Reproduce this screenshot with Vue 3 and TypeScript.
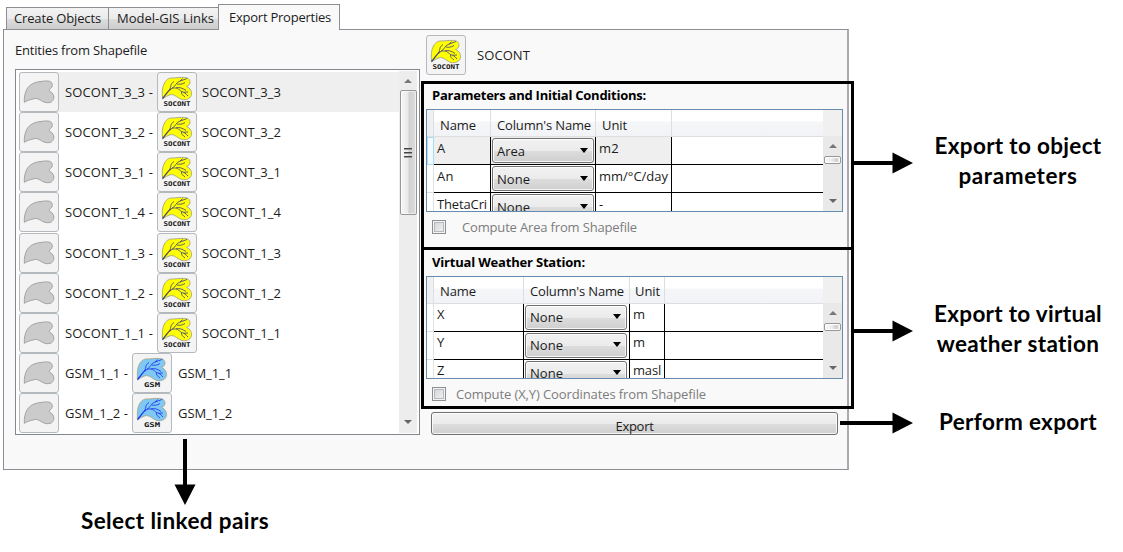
<script setup lang="ts">
import type { Directive } from 'vue'

interface Pair { name: string; kind: 'SOCONT' | 'GSM' }
interface GridRow { name: string; column: string; unit: string; unitWidth: number; nameWidth: number; selected?: boolean }
interface Grid {
  id: string
  title: string
  titleWidth: number
  rows: GridRow[]
  check: string
  checkWidth: number
}

/* Spreads the letters of a label so that it takes the given width. */
const vFit: Directive<HTMLElement, number> = {
  mounted(el, binding) {
    const count = (el.textContent ?? '').trim().length
    const natural = el.getBoundingClientRect().width
    if (count > 0) el.style.letterSpacing = `${(binding.value - natural) / count}px`
  },
}

const pairs: Pair[] = [
  { name: 'SOCONT_3_3', kind: 'SOCONT' },
  { name: 'SOCONT_3_2', kind: 'SOCONT' },
  { name: 'SOCONT_3_1', kind: 'SOCONT' },
  { name: 'SOCONT_1_4', kind: 'SOCONT' },
  { name: 'SOCONT_1_3', kind: 'SOCONT' },
  { name: 'SOCONT_1_2', kind: 'SOCONT' },
  { name: 'SOCONT_1_1', kind: 'SOCONT' },
  { name: 'GSM_1_1', kind: 'GSM' },
  { name: 'GSM_1_2', kind: 'GSM' },
]

const grids: Grid[] = [
  {
    id: 'params',
    title: 'Parameters and Initial Conditions:',
    titleWidth: 214,
    rows: [
      { name: 'A', nameWidth: 9, column: 'Area', unit: 'm2', unitWidth: 20, selected: true },
      { name: 'An', nameWidth: 17, column: 'None', unit: 'mm/°C/day', unitWidth: 69 },
      { name: 'ThetaCri', nameWidth: 50, column: 'None', unit: '-', unitWidth: 6 },
    ],
    check: 'Compute Area from Shapefile',
    checkWidth: 175,
  },
  {
    id: 'station',
    title: 'Virtual Weather Station:',
    titleWidth: 153,
    rows: [
      { name: 'X', nameWidth: 9, column: 'None', unit: 'm', unitWidth: 12 },
      { name: 'Y', nameWidth: 8, column: 'None', unit: 'm', unitWidth: 12 },
      { name: 'Z', nameWidth: 8, column: 'None', unit: 'masl', unitWidth: 28 },
    ],
    check: 'Compute (X,Y) Coordinates from Shapefile',
    checkWidth: 250,
  },
]
</script>

<template>
  <div class="page">
    <svg class="defs" width="0" height="0" aria-hidden="true">
      <defs>
        <symbol id="shape" viewBox="0 0 40 40">
          <path d="M5.3 30.3C5 25 6.200 20 8 17C11 12 16 10 22 9.500C27 8.500 31 8.700 32.500 10.500C34 13 33.500 15.500 30.600 17.300C29.800 19 31.500 20 33.200 21C36 24 35 28.500 31.800 30.300C28 31.500 24 30 21.500 28.200C18.500 26.300 16.500 26 14 27C11 27.600 8.500 28.400 5.300 30.300Z" fill="#cbcbcb" stroke="#a3a3a3" stroke-width="1" />
        </symbol>
        <symbol id="leaf" viewBox="0 0 40 40">
          <path d="M5.500 27C5.200 21 5 15 7.500 11C9.500 7 12.500 5.500 17 6C22 5.500 27 4.800 31 6.200C34.500 9 33 13.500 29.500 14.500C33.500 16 35.300 20 34.200 23.500C33 27 29 28.300 25 27.500C21 26.500 18.500 22.500 14.500 22.500C11 23 8.500 25 5.500 27Z" stroke="#a5a58a" stroke-width=".9" />
          <path d="M5.500 26.500C9 23 10 19 14.500 16.500" fill="none" stroke-width="1.300" />
          <path d="M14.500 16.500C19 14.500 19 10 22.500 9.300L30 6.500M12.500 18C14.500 14 13 12 17 9.500M20 12C22 12.500 25 12.500 28 10.500M23 9.300L25.500 6.500M15 16.300C20 15 22 17.500 24.500 19.500C27 20 29 21.500 31 24M19 15.800C22 15 25 15.800 29 18.500M24.500 19.500C24 22 26 23.500 28 25M26.500 20.300L31 20" fill="none" stroke-width=".85" />
        </symbol>
      </defs>
    </svg>

    <div class="tabs">
      <div class="tab first"><span v-fit="87">Create Objects</span></div>
      <div class="tab second"><span v-fit="97">Model-GIS Links</span></div>
      <div class="tab active"><span v-fit="102">Export Properties</span></div>
    </div>

    <div class="panel">
      <div class="left">
        <div class="caption"><span v-fit="132">Entities from Shapefile</span></div>
        <div class="list">
          <div class="rows">
            <div v-for="(p, i) in pairs" :key="p.name" class="pair" :class="{ selected: i === 0 }">
              <div class="tile"><svg><use href="#shape" /></svg></div>
              <div class="source" :class="{ short: p.kind === 'GSM' }"><span v-fit="p.kind === 'GSM' ? 63 : 88">{{ p.name }} -</span></div>
              <div class="tile">
                <svg :class="p.kind.toLowerCase()" viewBox="0 0 40 40">
                  <use href="#leaf" width="40" height="40" />
                  <text x="20" y="34.200" text-anchor="middle" :textLength="p.kind === 'GSM' ? 16 : 27" lengthAdjust="spacingAndGlyphs">{{ p.kind }}</text>
                </svg>
              </div>
              <div class="target" :class="{ short: p.kind === 'GSM' }"><span v-fit="p.kind === 'GSM' ? 54 : 79">{{ p.name }}</span></div>
            </div>
          </div>
          <div class="scroll">
            <i class="up"></i>
            <div class="thumb"><b></b><b></b><b></b></div>
            <i class="down"></i>
          </div>
        </div>
      </div>

      <div class="right">
        <div class="object">
          <div class="tile">
            <svg class="socont" viewBox="0 0 40 40">
              <use href="#leaf" width="40" height="40" />
              <text x="20" y="34.200" text-anchor="middle" textLength="27" lengthAdjust="spacingAndGlyphs">SOCONT</text>
            </svg>
          </div>
          <span v-fit="53">SOCONT</span>
        </div>

        <section v-for="g in grids" :key="g.id" :class="g.id">
          <h3><span v-fit="g.titleWidth">{{ g.title }}</span></h3>
          <div class="grid">
            <div class="table">
              <div class="line head">
                <div class="stub"></div>
                <div class="c1"><span v-fit="36">Name</span></div>
                <div class="c2"><span v-fit="94">Column's Name</span></div>
                <div class="c3"><span v-fit="25">Unit</span></div>
                <div class="c4"></div>
              </div>
              <div v-for="r in g.rows" :key="r.name" class="line" :class="{ selected: r.selected }">
                <div class="stub"></div>
                <div class="c1"><span v-fit="r.nameWidth">{{ r.name }}</span></div>
                <div class="c2"><div class="combo"><span v-fit="r.column === 'Area' ? 28 : 33">{{ r.column }}</span><i></i></div></div>
                <div class="c3"><span v-fit="r.unitWidth">{{ r.unit }}</span></div>
                <div class="c4"></div>
              </div>
            </div>
            <div class="mini"><i class="up"></i><div class="knob"></div><i class="down"></i></div>
          </div>
          <div class="check"><div class="box"></div><span v-fit="g.checkWidth">{{ g.check }}</span></div>
        </section>

        <div class="export"><span v-fit="38">Export</span></div>
      </div>
    </div>

    <div class="frame upper"></div>
    <div class="frame lower"></div>
    <svg class="arrows" width="1123" height="552" viewBox="0 0 1123 552">
      <path d="M853 163H894M853 331H894M840 423H894M185 439V486" stroke="#000" stroke-width="4" />
      <path d="M892.500 152.500L913 163L892.500 173.500ZM892.500 320.500L913 331L892.500 341.500ZM892.500 412.500L913 423L892.500 433.500ZM174.500 484.500L185 505L195.500 484.500Z" />
    </svg>
    <div class="note n1"><span v-fit="167">Export to object</span><br /><span v-fit="119">parameters</span></div>
    <div class="note n2"><span v-fit="168">Export to virtual</span><br /><span v-fit="163">weather station</span></div>
    <div class="note n3"><span v-fit="158">Perform export</span></div>
    <div class="note n4"><span v-fit="188">Select linked pairs</span></div>
  </div>
</template>

<style>
body { background: #fff; overflow: hidden; }
</style>

<style scoped>
.page { position: relative; width: 1123px; height: 552px; overflow: hidden; background: #fff; color: #1c1c1c; font: 13px/18px "Open Sans", "Noto Sans", sans-serif; white-space: nowrap; }
.page * { box-sizing: border-box; }
.page span { display: inline-block; }
.defs { position: absolute; }
.tabs { display: flex; align-items: flex-end; height: 30px; padding-left: 6px; }
.tab { height: 23px; border: 1px solid #8c8e94; background: linear-gradient(#f3f3f3, #ebebeb 50%, #dddddd 51%, #cdcdcd); padding: 1px 0 0 7px; }
.first { width: 103px; }
.second { width: 110px; border-left: 0; padding-left: 8px; }
.active { position: relative; z-index: 1; width: 122px; height: 26px; margin-left: -1px; padding: 3px 0 0 10px; border-bottom: 0; background: #f9f9f9; }
.panel { display: flex; width: 846px; height: 441px; margin: -1px 0 0 3px; border: 1px solid #8c8e94; border-right: 2px solid #a9abb1; background: #f9f9f9; }
.left { width: 417px; padding: 11px 0 0 11px; }
.caption { height: 28px; }
.list { display: flex; width: 405px; height: 366px; border: 1px solid #828790; background: #fff; padding: 1px 2px 1px 2px; }
.rows { flex: 1; padding: 1px 0 0 1px; }
.pair { display: flex; align-items: center; height: 40.150px; }
.pair.selected { background: #efefef; }
.tile { width: 40px; height: 40px; flex: none; border: 1px solid #b4b9bd; border-radius: 3px; background: #f4f4f4; }
.tile svg { display: block; width: 40px; height: 40px; margin: -1px; }
.tile text { font: bold 6.500px "DejaVu Sans Mono", monospace; fill: #111; stroke: none; }
.socont { fill: #ffff00; stroke: #45457c; }
.gsm { fill: #7fc8f3; stroke: #1a36f0; }
.source { width: 98px; padding-left: 6px; }
.source.short { width: 73px; }
.target { padding-left: 5px; }
.target.short { padding-left: 6px; }
.scroll { position: relative; display: flex; flex-direction: column; align-items: center; width: 18px; background: #ededed; }
i.up, i.down { display: block; width: 0; height: 0; border: 4px solid transparent; }
i.up { border-top: 0; border-bottom: 4px solid #777; }
i.down { border-bottom: 0; border-top: 4px solid #666; }
.scroll .up { margin-top: 8px; }
.scroll .down { margin-top: auto; margin-bottom: 9px; }
.thumb { display: flex; flex-direction: column; align-items: center; justify-content: center; gap: 2px; width: 17px; height: 125px; margin-top: 7px; border: 1px solid #969696; border-radius: 2px; background: linear-gradient(90deg, #f7f7f7, #e8e8e8 48%, #cfcfcf 52%, #dedede); box-shadow: inset 0 0 0 1px #fff9; }
.thumb b { width: 8px; height: 2px; background: #444; border-bottom: 1px solid #999; }
.right { width: 426px; padding: 5px 0 0 5px; }
.object { display: flex; align-items: center; height: 40px; }
.object span { margin-left: 11px; }
h3 { margin: 0; padding-left: 6px; font: bold 13px/18px "Open Sans", "Noto Sans", sans-serif; color: #000; }
.params { height: 167px; padding-top: 11px; }
.station { height: 170px; padding-top: 11px; }
.params h3 { height: 23px; }
.station h3 { height: 23px; }
.grid { display: flex; width: 417px; height: 103px; border: 1px solid #688caf; background: #fff; overflow: hidden; }
.table { width: 396px; flex: none; }
.line { display: flex; height: 28px; }
.stub { width: 7px; background: #fff; border-right: 1px solid #e0e2e5; border-bottom: 1px solid #ddd; }
.line > .c1, .line > .c2, .line > .c3, .line > .c4 { border-bottom: 1px solid #000; border-right: 1px solid #000; overflow: hidden; }
.line > .c4 { flex: 1; border-right: 0; }
.c1 { width: 57px; padding: 2px 0 0 3px; }
.c2 { width: 105px; padding: 1px; }
.c3 { width: 76px; padding: 2px 0 0 3px; }
.station .c1 { width: 90px; }
.station .c2 { width: 106px; }
.station .c3 { width: 35px; }
.line.head { height: 27px; background: linear-gradient(#fff, #fff 40%, #f5f6f8 45%, #f1f3f6); }
.line.head > div { border-color: #dcdee2; padding-top: 6px; }
.station .line.head > div { padding-top: 5px; }
.line.head > .c1 { padding-left: 6px; }
.line.head > .c2 { padding-left: 6px; }
.line.head > .c3 { padding-left: 6px; }
.line.head > .stub { background: #f0f0f0; }
.station .line.head > .c3 { padding-left: 5px; }
.station .line:not(.head) > .c1, .station .line:not(.head) > .c3 { padding-top: 1px; }
.selected > .c1, .selected > .c2, .selected > .c3 { background: #efefef; }
.selected > .stub { border: 1px solid #a8dcf4; background: #f1faff; }
.combo { display: flex; align-items: center; justify-content: space-between; width: 102px; height: 25px; padding: 0 5px 0 4px; border: 1px solid #707070; border-radius: 3px; background: linear-gradient(#f2f2f2, #ebebeb 50%, #dddddd 51%, #cfcfcf); box-shadow: inset 0 0 0 1px #fffc; }
.combo i { width: 0; height: 0; margin-top: -1px; border: 4px solid transparent; border-bottom: 0; border-top: 5px solid #000; }
.station .combo { margin-top: -0.500px; }
.mini { display: flex; flex-direction: column; align-items: center; width: 19px; background: linear-gradient(#f0f0f0 26px, #e9e9e9 26px); }
.mini .up { margin-top: 34px; }
.knob { width: 17px; height: 8px; margin-top: 8px; border: 1px solid #969696; border-radius: 2px; background: linear-gradient(90deg, #f7f7f7, #eee 45%, #cfcfcf 75%, #eee); box-shadow: inset 0 0 0 1px #fff; }
.mini .down { margin-top: auto; margin-bottom: 8px; }
.check { display: flex; align-items: center; height: 18px; margin-top: 6px; padding-left: 6px; color: #7c7c7c; }
.box { width: 14px; height: 14px; margin-right: 16px; border: 1px solid #8e8f8f; background: linear-gradient(135deg, #cfd2d6, #f5f5f5); box-shadow: inset 0 0 0 1px #f4f4f4, inset 0 0 0 2px #b6bac0; }
.station .box { margin-right: 10px; }
.export { display: flex; align-items: center; justify-content: center; width: 407px; height: 23px; margin-left: 5px; padding-top: 4px; border: 1px solid #707070; border-radius: 3px; background: linear-gradient(#f2f2f2, #ebebeb 50%, #dddddd 51%, #cfcfcf); box-shadow: inset 0 0 0 1px #fffc; }
.frame { position: absolute; left: 421px; width: 433px; border: 3px solid #000; }
.upper { top: 81px; height: 169px; }
.lower { top: 247px; height: 162px; }
.arrows { position: absolute; left: 0; top: 0; }
.note { position: absolute; left: 918px; width: 200px; text-align: center; color: #000; font: bold 22.500px/30px Lato, Carlito, sans-serif; }
.n1 { top: 131px; }
.n2 { top: 299px; }
.n3 { top: 407px; }
.n4 { top: 506px; left: 75px; }
</style>
